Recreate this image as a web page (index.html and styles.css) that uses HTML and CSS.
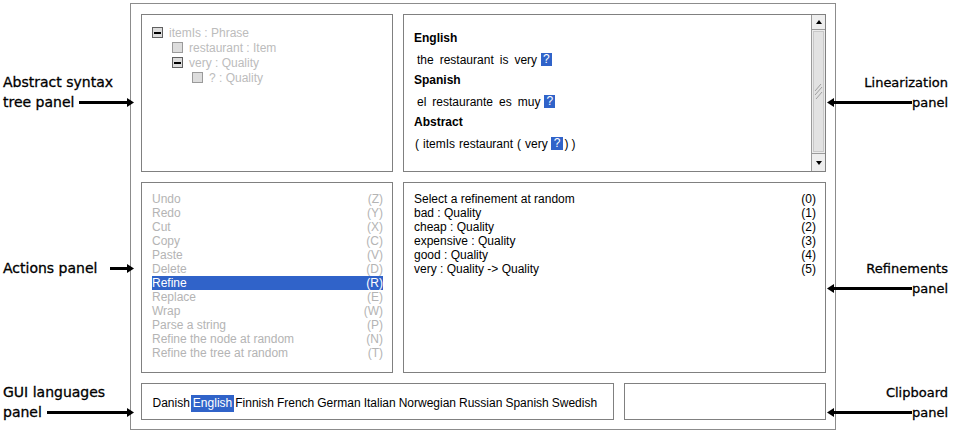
FILE: index.html
```html
<!DOCTYPE html>
<html lang="en">
<head>
    <meta charset="UTF-8">
    <title>GF Editor panels</title>
    <link rel="stylesheet" href="styles.css">
</head>
<body>
    <div class="figure">
        <div class="notes notes-left">
            <div class="note note-tree">
                <div class="note-line">Abstract syntax</div>
                <div class="note-line">tree panel
                    <svg class="arrow" width="55" height="9" viewBox="0 0 55 9"><rect x="0" y="3" width="49" height="3"/><polygon points="48,0 55,4.5 48,9"/></svg>
                </div>
            </div>
            <div class="note note-actions">
                <div class="note-line">Actions panel
                    <svg class="arrow" width="24" height="9" viewBox="0 0 24 9"><rect x="0" y="3" width="18" height="3"/><polygon points="17,0 24,4.5 17,9"/></svg>
                </div>
            </div>
            <div class="note note-langs">
                <div class="note-line">GUI languages</div>
                <div class="note-line">panel
                    <svg class="arrow" width="87" height="9" viewBox="0 0 87 9"><rect x="0" y="3" width="81" height="3"/><polygon points="80,0 87,4.5 80,9"/></svg>
                </div>
            </div>
        </div>

        <div class="window">
            <div class="panel tree">
                <div class="node"><span class="toggle open"></span>itemIs : Phrase</div>
                <div class="node depth-1"><span class="toggle"></span>restaurant : Item</div>
                <div class="node depth-1"><span class="toggle open"></span>very : Quality</div>
                <div class="node depth-2"><span class="toggle"></span>? : Quality</div>
            </div>

            <div class="panel lin">
                <div class="lin-text">
                    <div class="lang-name">English</div>
                    <div class="tokens"><span class="tok">the</span><span class="tok">restaurant</span><span class="tok">is</span><span class="tok">very</span><span class="hole">?</span></div>
                    <div class="lang-name">Spanish</div>
                    <div class="tokens"><span class="tok">el</span><span class="tok">restaurante</span><span class="tok">es</span><span class="tok">muy</span><span class="hole">?</span></div>
                    <div class="lang-name">Abstract</div>
                    <div class="tokens abstract"><span class="tok">(</span><span class="tok">itemIs</span><span class="tok">restaurant</span><span class="tok">(</span><span class="tok">very</span><span class="hole wide">?</span><span class="tok close">)</span><span class="tok close">)</span></div>
                </div>
                <div class="scrollbar">
                    <div class="sb-btn sb-up"><span class="tri-up"></span></div>
                    <div class="sb-thumb">
                        <svg width="9" height="17" viewBox="0 0 9 17"><path d="M1 8 L7 1 M1 12 L8 4 M2 16 L8 9" stroke="#a0a0a0" fill="none"/></svg>
                    </div>
                    <div class="sb-btn sb-down"><span class="tri-down"></span></div>
                </div>
            </div>

            <div class="panel actions">
                <div class="row"><span>Undo</span><span>(Z)</span></div>
                <div class="row"><span>Redo</span><span>(Y)</span></div>
                <div class="row"><span>Cut</span><span>(X)</span></div>
                <div class="row"><span>Copy</span><span>(C)</span></div>
                <div class="row"><span>Paste</span><span>(V)</span></div>
                <div class="row"><span>Delete</span><span>(D)</span></div>
                <div class="row selected"><span>Refine</span><span>(R)</span></div>
                <div class="row"><span>Replace</span><span>(E)</span></div>
                <div class="row"><span>Wrap</span><span>(W)</span></div>
                <div class="row"><span>Parse a string</span><span>(P)</span></div>
                <div class="row"><span>Refine the node at random</span><span>(N)</span></div>
                <div class="row"><span>Refine the tree at random</span><span>(T)</span></div>
            </div>

            <div class="panel refinements">
                <div class="row"><span>Select a refinement at random</span><span>(0)</span></div>
                <div class="row"><span>bad : Quality</span><span>(1)</span></div>
                <div class="row"><span>cheap : Quality</span><span>(2)</span></div>
                <div class="row"><span>expensive : Quality</span><span>(3)</span></div>
                <div class="row"><span>good : Quality</span><span>(4)</span></div>
                <div class="row"><span>very : Quality -&gt; Quality</span><span>(5)</span></div>
            </div>

            <div class="bottom-row">
                <div class="panel langs">
                    <span class="ui-lang">Danish</span><span class="ui-lang current">English</span><span class="ui-lang">Finnish</span><span class="ui-lang">French</span><span class="ui-lang">German</span><span class="ui-lang">Italian</span><span class="ui-lang">Norwegian</span><span class="ui-lang">Russian</span><span class="ui-lang">Spanish</span><span class="ui-lang">Swedish</span>
                </div>
                <div class="panel clipboard"></div>
            </div>
        </div>

        <div class="notes notes-right">
            <div class="note note-lin">
                <div class="note-line">Linearization</div>
                <div class="note-line">
                    <svg class="arrow" width="85" height="9" viewBox="0 0 85 9"><polygon points="7,0 0,4.5 7,9"/><rect x="6" y="3" width="79" height="3"/></svg>
                    panel
                </div>
            </div>
            <div class="note note-ref">
                <div class="note-line">Refinements</div>
                <div class="note-line">
                    <svg class="arrow" width="85" height="9" viewBox="0 0 85 9"><polygon points="7,0 0,4.5 7,9"/><rect x="6" y="3" width="79" height="3"/></svg>
                    panel
                </div>
            </div>
            <div class="note note-clip">
                <div class="note-line">Clipboard</div>
                <div class="note-line">
                    <svg class="arrow" width="85" height="9" viewBox="0 0 85 9"><polygon points="7,0 0,4.5 7,9"/><rect x="6" y="3" width="79" height="3"/></svg>
                    panel
                </div>
            </div>
        </div>
    </div>
</body>
</html>
```

FILE: styles.css
```css
* {
    box-sizing: border-box;
}

body {
    margin: 0;
    background-color: #fff;
    font-family: "Liberation Sans", Arial, sans-serif;
    font-size: 12px;
    color: #000;
}

.figure {
    display: flex;
    width: 961px;
    height: 434px;
}

/* callout labels */

.notes {
    display: flex;
    flex-direction: column;
    flex: none;
    padding-top: 72px;
    font-family: "DejaVu Sans", sans-serif;
    font-size: 13px;
    -webkit-text-stroke: 0.3px #000;
}

.notes-left {
    width: 130px;
    padding-left: 3px;
    font-size: 14px;
}

.notes-right {
    width: 125px;
    padding-right: 13px;
}

.note-line {
    display: flex;
    align-items: center;
    height: 20px;
    white-space: nowrap;
}

.notes-right .note-line {
    justify-content: flex-end;
}

.arrow {
    position: relative;
    fill: #000;
    flex: none;
}

.notes-left .arrow {
    margin-left: auto;
    margin-right: -4px;
}

.notes-right .arrow {
    margin-left: -9px;
    margin-right: auto;
}

.note-actions {
    margin-top: 146px;
}

.note-langs {
    margin-top: 104px;
}

.note-ref {
    margin-top: 146px;
}

.note-clip {
    margin-top: 84px;
}

/* editor window */

.window {
    margin-top: 3px;
    width: 706px;
    height: 427px;
    border: 1px solid #8c8c8c;
    padding: 10px 9px 9px 10px;
    display: grid;
    grid-template-columns: 252px 423px;
    grid-template-rows: 158px 191px 37px;
    gap: 10px;
}

.panel {
    border: 1px solid #808080;
    background-color: #fff;
}

/* abstract syntax tree */

.tree {
    padding: 10px;
}

.node {
    display: flex;
    align-items: center;
    gap: 6px;
    height: 15px;
    color: #bcbcbc;
    white-space: nowrap;
}

.depth-1 {
    padding-left: 20px;
}

.depth-2 {
    padding-left: 40px;
}

.toggle {
    display: flex;
    align-items: center;
    justify-content: center;
    width: 11px;
    height: 11px;
    border: 1px solid #9a9a9a;
    background-color: #dddddd;
}

.toggle.open {
    border-color: #606060;
}

.toggle.open::after {
    content: "";
    width: 7px;
    height: 2px;
    background-color: #000;
}

/* linearization */

.lin {
    display: flex;
}

.lin-text {
    flex: 1;
    padding: 13px 10px;
}

.lang-name {
    height: 21px;
    line-height: 21px;
    font-weight: bold;
}

.tokens {
    display: flex;
    align-items: center;
    height: 21px;
    white-space: nowrap;
}

.tok {
    margin: 0 3px;
}

.abstract .tok {
    margin: 0 2px;
}

.abstract .tok:first-child {
    margin-left: 1px;
}

.abstract .tok.close {
    margin: 0 0 0 1px;
}

.abstract .tok.close + .tok.close {
    margin-left: 3px;
}

.hole {
    display: inline-block;
    height: 13px;
    line-height: 13px;
    padding: 0 2px;
    margin-left: 1px;
    margin-right: 3px;
    background-color: #3063c9;
    color: #fff;
}

.hole.wide {
    padding: 0 3px;
    margin-right: 0;
}

.scrollbar {
    display: flex;
    flex-direction: column;
    width: 14px;
    border-left: 1px solid #9a9a9a;
    background-color: #ececec;
}

.sb-btn {
    display: flex;
    align-items: center;
    justify-content: center;
    background-color: #eeeeee;
}

.sb-up {
    height: 15px;
    border-bottom: 1px solid #9a9a9a;
}

.sb-down {
    height: 18px;
    border-top: 1px solid #9a9a9a;
}

.tri-up {
    border-left: 3px solid transparent;
    border-right: 3px solid transparent;
    border-bottom: 4px solid #000;
}

.tri-down {
    border-left: 3px solid transparent;
    border-right: 3px solid transparent;
    border-top: 4px solid #000;
}

.sb-thumb {
    flex: 1;
    display: flex;
    align-items: center;
    justify-content: center;
    margin: 1px 1px;
    background-color: #e2e2e2;
    border: 1px solid #c8c8c8;
}

/* actions and refinements */

.actions,
.refinements {
    padding: 9px 9px 0 10px;
}

.row {
    display: flex;
    justify-content: space-between;
    height: 14px;
    line-height: 14px;
    white-space: nowrap;
}

.actions .row {
    color: #b4b4b4;
}

.actions .row.selected {
    background-color: #3063c9;
    color: #fff;
}

/* bottom row */

.bottom-row {
    grid-column: 1 / -1;
    display: flex;
    gap: 10px;
}

.langs {
    width: 473px;
    display: flex;
    align-items: center;
    padding: 4px 0 0 9px;
    white-space: nowrap;
}

.ui-lang {
    padding: 0 1.5px;
    line-height: 17px;
}

.ui-lang.current {
    background-color: #3063c9;
    color: #fff;
}

.clipboard {
    flex: 1;
}
```
